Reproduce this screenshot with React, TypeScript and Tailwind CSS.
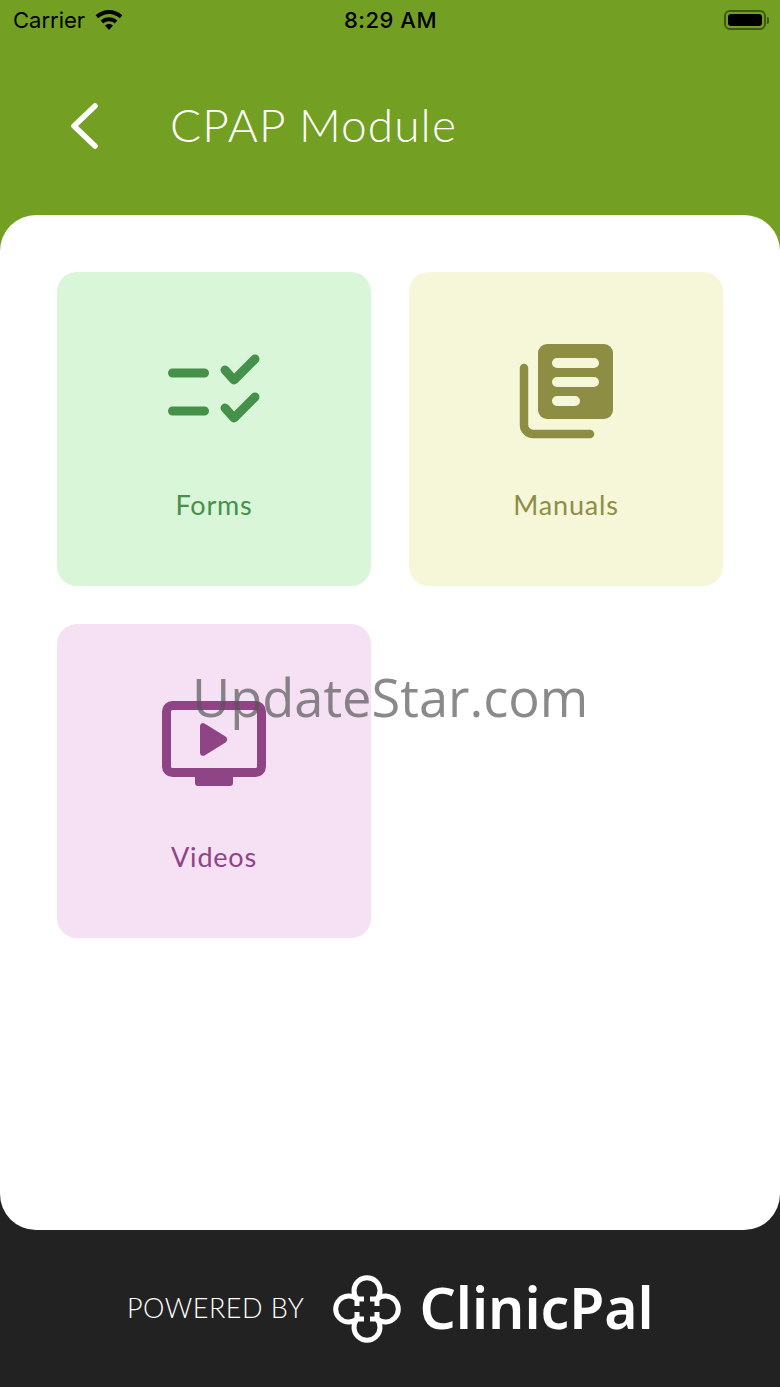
import { ReactNode } from "react";

const FormsIcon = () => (
  <svg width="104" height="80" viewBox="0 0 104 80" fill="none" stroke="#46914a" strokeWidth="9" strokeLinecap="round" strokeLinejoin="round">
    <path d="M10.500 21h32M10.500 59h32" />
    <path d="M63 18l9 10 21-21M63 56l9 10 21-21" />
  </svg>
);

const ManualsIcon = () => (
  <svg width="104" height="104" viewBox="5 2 104 104" fill="none">
    <rect x="29" y="6" width="75" height="75" rx="9" fill="#8d8e44" />
    <path d="M48 25h37M48 44h37M48 63h18" stroke="#f6f6d9" strokeWidth="10" strokeLinecap="round" />
    <path d="M15 30v57a9 9 0 0 0 9 9h57" stroke="#8d8e44" strokeWidth="8.500" strokeLinecap="round" />
  </svg>
);

const VideosIcon = () => (
  <svg width="104" height="86" viewBox="0 0 104 86" fill="none">
    <rect x="4.500" y="4.500" width="95" height="67" rx="6" stroke="#8f4486" strokeWidth="9" />
    <path d="M33 76h38v6a3 3 0 0 1-3 3H36a3 3 0 0 1-3-3z" fill="#8f4486" />
    <path d="M38 25a3 3 0 0 1 4.500-2.600l21 13a3.500 3.500 0 0 1 0 6l-21 13A3 3 0 0 1 38 52z" fill="#8f4486" />
  </svg>
);

const CloverLogo = () => (
  <svg width="68" height="68" viewBox="0 0 68 68" fill="none" stroke="#fff" strokeWidth="5">
    <path d="M24 31V24A13 13 0 1 1 44 24V31" />
    <path d="M24 37V44A13 13 0 1 0 44 44V37" />
    <path d="M31 24H24A13 13 0 1 0 24 44H31" />
    <path d="M37 24H44A13 13 0 1 1 44 44H37" />
  </svg>
);

function Tile({ bg, color, icon, label }: { bg: string; color: string; icon: ReactNode; label: string }) {
  return (
    <div className={`h-[314px] rounded-[20px] flex flex-col items-center ${bg}`}>
      <div className="h-[210px] flex items-center justify-center pt-[30px]">{icon}</div>
      <div className={`text-[27px] leading-[36px] mt-[5px] tracking-[0.8px] ${color}`}>{label}</div>
    </div>
  );
}

export default function App() {
  return (
    <div className="relative w-[780px] h-[1387px] overflow-hidden bg-[#222222] flex flex-col font-['Lato',sans-serif]">
      <div className="h-[251px] shrink-0 bg-[#73a022]">
        <div className="h-[40px] flex items-center justify-between pl-[13px] pr-[11px] relative font-['Inter',sans-serif] text-black text-[22px]">
          <div className="flex items-center gap-[9px]">
            <span>Carrier</span>
            <svg width="30" height="22" viewBox="0 0 30 22" fill="#000">
              <path d="M15 1c5 0 9.700 2 13.400 5.300l-2.600 3C22.900 6.600 19.100 5 15 5S7.100 6.600 4.200 9.300l-2.600-3C5.300 3 10 1 15 1z" />
              <path d="M15 8.200c3.200 0 6.100 1.200 8.400 3.300l-2.700 3C19.200 13.100 17.200 12.300 15 12.300s-4.200.8-5.700 2.200l-2.700-3c2.300-2.100 5.200-3.300 8.400-3.300z" />
              <path d="M15 15c1.600 0 3 .6 4 1.600L15 21l-4-4.400c1-1 2.400-1.600 4-1.600z" />
            </svg>
          </div>
          <span className="absolute left-[344px] font-medium tracking-[0.5px]">8:29 AM</span>
          <div className="flex items-center">
            <div className="w-[42px] h-[20px] rounded-[6px] border-2 border-[#3f5a12] p-[2px]">
              <div className="w-full h-full rounded-[3px] bg-black" />
            </div>
            <div className="w-[2px] h-[7px] ml-[1px] rounded-r bg-[#3f5a12]" />
          </div>
        </div>
        <div className="flex items-center h-[92px] mt-[40px] pl-[71px] text-white">
          <svg width="28" height="46" viewBox="0 0 28 46" fill="none" stroke="#fff" strokeWidth="5.500" strokeLinecap="round" strokeLinejoin="round">
            <path d="M24 3L3 23l21 20" />
          </svg>
          <span className="ml-[71px] mb-[2px] text-[46px] leading-[60px] font-light tracking-[1.100px]">CPAP Module</span>
        </div>
      </div>

      <main className="relative -mt-[36px] h-[1015px] shrink-0 bg-white rounded-[36px] px-[57px] pt-[57px]">
        <div className="grid grid-cols-2 gap-[38px]">
          <Tile bg="bg-[#d9f6d9]" color="text-[#46914a]" icon={<FormsIcon />} label="Forms" />
          <Tile bg="bg-[#f6f6d9]" color="text-[#8d8e44]" icon={<ManualsIcon />} label="Manuals" />
          <Tile bg="bg-[#f6e0f4]" color="text-[#8f4486]" icon={<VideosIcon />} label="Videos" />
        </div>
      </main>

      <footer className="flex-1 flex items-center pl-[127px] text-white">
        <span className="text-[27px] font-light tracking-[0.5px] whitespace-nowrap">POWERED BY</span>
        <div className="ml-[29px] shrink-0"><CloverLogo /></div>
        <span className="ml-[18px] mb-[4px] text-[57px] leading-[60px] font-semibold font-['Noto_Sans',sans-serif]">ClinicPal</span>
      </footer>

      <div className="absolute left-[192px] top-[661px] text-[52.400px] leading-[72px] text-[#555555b0] font-['Open_Sans',sans-serif]">UpdateStar.com</div>
    </div>
  );
}
